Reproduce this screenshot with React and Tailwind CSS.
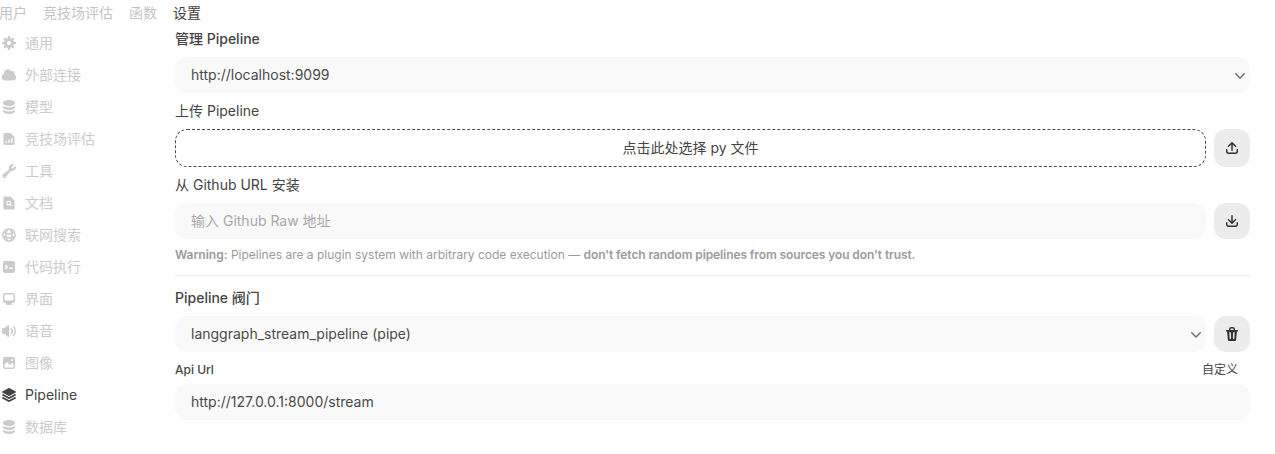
import React from 'react';
import { HiSquare3Stack3D, HiMiniChevronDown, HiMiniDocumentMagnifyingGlass, HiOutlineGlobeAlt } from 'react-icons/hi2';

const Micro = ({ children }) => (
  <svg viewBox="0 0 16 16" fill="currentColor" className="h-4 w-4 shrink-0">
    {children}
  </svg>
);

const GearIcon = () => (
  <Micro>
    <path fillRule="evenodd" clipRule="evenodd" d="M6.955 1.45A.5.5 0 0 1 7.452 1h1.096a.5.5 0 0 1 .497.45l.17 1.699c.484.12.94.312 1.356.562l1.321-1.081a.5.5 0 0 1 .67.033l.774.775a.5.5 0 0 1 .034.67l-1.08 1.32c.25.417.44.873.561 1.357l1.699.17a.5.5 0 0 1 .45.497v1.096a.5.5 0 0 1-.45.497l-1.699.17c-.12.484-.312.94-.562 1.356l1.082 1.322a.5.5 0 0 1-.034.67l-.774.774a.5.5 0 0 1-.67.033l-1.322-1.08c-.416.25-.872.44-1.356.561l-.17 1.699a.5.5 0 0 1-.497.45H7.452a.5.5 0 0 1-.497-.45l-.17-1.699a4.973 4.973 0 0 1-1.356-.562L4.108 13.37a.5.5 0 0 1-.67-.033l-.774-.775a.5.5 0 0 1-.034-.67l1.08-1.32a4.971 4.971 0 0 1-.561-1.357l-1.699-.17A.5.5 0 0 1 1 8.548V7.452a.5.5 0 0 1 .45-.497l1.699-.17c.12-.484.312-.94.562-1.356L2.629 4.107a.5.5 0 0 1 .034-.67l.774-.774a.5.5 0 0 1 .67-.033L5.43 3.71a4.97 4.97 0 0 1 1.356-.561l.17-1.699ZM6 8c0 .538.212 1.026.558 1.385l.057.057a2 2 0 0 0 2.828-2.828l-.058-.056A2 2 0 0 0 6 8Z" />
  </Micro>
);

const CloudIcon = () => (
  <svg viewBox="0 0 20 20" fill="currentColor" className="h-4 w-4 shrink-0">
    <path d="M1 12.5A4.5 4.5 0 0 0 5.5 17H15a4 4 0 0 0 1.866-7.539 3.504 3.504 0 0 0-4.504-4.272A4.5 4.5 0 0 0 4.06 8.235 4.502 4.502 0 0 0 1 12.5Z" />
  </svg>
);

const StackIcon = () => (
  <Micro>
    <path d="M8 7c3.314 0 6-1.343 6-3s-2.686-3-6-3-6 1.343-6 3 2.686 3 6 3Z" />
    <path d="M8 8.5c1.84 0 3.579-.37 4.914-1.037A6.33 6.33 0 0 0 14 6.78V8c0 1.657-2.686 3-6 3S2 9.657 2 8V6.78c.346.273.72.5 1.087.683C4.42 8.131 6.16 8.5 8 8.5Z" />
    <path d="M8 12.5c1.84 0 3.579-.37 4.914-1.037.366-.183.74-.41 1.086-.684V12c0 1.657-2.686 3-6 3s-6-1.343-6-3v-1.22c.346.273.72.5 1.087.683C4.42 12.131 6.16 12.5 8 12.5Z" />
  </Micro>
);

const ChartDocIcon = () => (
  <Micro>
    <path fillRule="evenodd" clipRule="evenodd" d="M4 2a1.5 1.5 0 0 0-1.5 1.5v9A1.5 1.5 0 0 0 4 14h8a1.5 1.5 0 0 0 1.5-1.5V6.621a1.5 1.5 0 0 0-.44-1.06L9.94 2.439A1.5 1.5 0 0 0 8.878 2H4Zm6 5.75a.75.75 0 0 1 1.5 0v3.5a.75.75 0 0 1-1.5 0v-3.5Zm-2.75 1.5a.75.75 0 0 1 1.5 0v2a.75.75 0 0 1-1.5 0v-2Zm-2 .75a.75.75 0 0 0-.75.75v.5a.75.75 0 0 0 1.5 0v-.5a.75.75 0 0 0-.75-.75Z" />
  </Micro>
);

const WrenchIcon = () => (
  <Micro>
    <path fillRule="evenodd" clipRule="evenodd" d="M11.5 8a3.5 3.5 0 0 0 3.362-4.476c-.094-.325-.497-.39-.736-.15L12.099 5.4a.48.48 0 0 1-.653.033 8.554 8.554 0 0 1-.879-.879.48.48 0 0 1 .033-.653l2.027-2.028c.24-.239.175-.642-.15-.736a3.502 3.502 0 0 0-4.476 3.427c.018.99-.133 2.093-.914 2.7l-5.31 4.13a2.015 2.015 0 1 0 2.828 2.828l4.13-5.309c.607-.78 1.71-.932 2.7-.914L11.5 8ZM3 13.25a.75.75 0 1 1-1.5 0 .75.75 0 0 1 1.5 0Z" />
  </Micro>
);

const DocSearchIcon = () => <HiMiniDocumentMagnifyingGlass className="h-4 w-4 shrink-0" />;

const GlobeIcon = () => <HiOutlineGlobeAlt className="h-4 w-4 shrink-0" strokeWidth={2.2} />;

const TerminalIcon = () => (
  <Micro>
    <path fillRule="evenodd" clipRule="evenodd" d="M2 4a2 2 0 0 1 2-2h8a2 2 0 0 1 2 2v8a2 2 0 0 1-2 2H4a2 2 0 0 1-2-2V4Zm2.22 1.97a.75.75 0 0 0 0 1.06l.97.97-.97.97a.75.75 0 1 0 1.06 1.06l1.5-1.5a.75.75 0 0 0 0-1.06l-1.5-1.5a.75.75 0 0 0-1.06 0ZM8.75 8.5a.75.75 0 0 0 0 1.5h2.5a.75.75 0 0 0 0-1.5h-2.5Z" />
  </Micro>
);

const MonitorIcon = () => (
  <Micro>
    <path fillRule="evenodd" clipRule="evenodd" d="M2 4.25A2.25 2.25 0 0 1 4.25 2h7.5A2.25 2.25 0 0 1 14 4.25v5.5A2.25 2.25 0 0 1 11.75 12h-1.312c.1.128.21.248.328.36a.75.75 0 0 1 .234.545v.345a.75.75 0 0 1-.75.75h-4.5a.75.75 0 0 1-.75-.75v-.345a.75.75 0 0 1 .234-.545c.118-.111.228-.232.328-.36H4.25A2.25 2.25 0 0 1 2 9.75v-5.5Zm2.25-.75a.75.75 0 0 0-.75.75v4.5c0 .414.336.75.75.75h7.5a.75.75 0 0 0 .75-.75v-4.5a.75.75 0 0 0-.75-.75h-7.5Z" />
  </Micro>
);

const SpeakerIcon = () => (
  <Micro>
    <path d="M7.557 2.066A.75.75 0 0 1 8 2.75v10.5a.75.75 0 0 1-1.248.56L3.59 11H2a1 1 0 0 1-1-1V6a1 1 0 0 1 1-1h1.59l3.162-2.81a.75.75 0 0 1 .805-.124ZM12.95 3.05a.75.75 0 1 0-1.06 1.06 5.5 5.5 0 0 1 0 7.78.75.75 0 1 0 1.06 1.06 7 7 0 0 0 0-9.9Z" />
    <path d="M10.828 5.172a.75.75 0 1 0-1.06 1.06 2.5 2.5 0 0 1 0 3.536.75.75 0 1 0 1.06 1.06 4 4 0 0 0 0-5.656Z" />
  </Micro>
);

const PhotoIcon = () => (
  <Micro>
    <path fillRule="evenodd" clipRule="evenodd" d="M2 4a2 2 0 0 1 2-2h8a2 2 0 0 1 2 2v8a2 2 0 0 1-2 2H4a2 2 0 0 1-2-2V4Zm10.5 5.707a.5.5 0 0 0-.146-.353l-1-1a.5.5 0 0 0-.708 0L9.354 9.646a.5.5 0 0 1-.708 0L6.354 7.354a.5.5 0 0 0-.708 0l-2 2a.5.5 0 0 0-.146.353V12a.5.5 0 0 0 .5.5h8a.5.5 0 0 0 .5-.5V9.707ZM12 5a1 1 0 1 1-2 0 1 1 0 0 1 2 0Z" />
  </Micro>
);

const PipelineIcon = () => <HiSquare3Stack3D className="h-4 w-4 shrink-0" />;

const tabs = ['用户', '竞技场评估', '函数', '设置'];

const navItems = [
  { label: '通用', icon: GearIcon },
  { label: '外部连接', icon: CloudIcon },
  { label: '模型', icon: StackIcon },
  { label: '竞技场评估', icon: ChartDocIcon },
  { label: '工具', icon: WrenchIcon },
  { label: '文档', icon: DocSearchIcon },
  { label: '联网搜索', icon: GlobeIcon },
  { label: '代码执行', icon: TerminalIcon },
  { label: '界面', icon: MonitorIcon },
  { label: '语音', icon: SpeakerIcon },
  { label: '图像', icon: PhotoIcon },
  { label: 'Pipeline', icon: PipelineIcon, active: true },
  { label: '数据库', icon: StackIcon },
];

const TrayPath = () => (
  <path d="M3.5 9.75a.75.75 0 0 0-1.5 0v1.5A2.75 2.75 0 0 0 4.75 14h6.5A2.75 2.75 0 0 0 14 11.25v-1.5a.75.75 0 0 0-1.5 0v1.5c0 .69-.56 1.25-1.25 1.25h-6.5c-.69 0-1.25-.56-1.25-1.25v-1.5Z" />
);

const UploadIcon = () => (
  <Micro>
    <path d="M7.25 10.25a.75.75 0 0 0 1.5 0V4.56l2.22 2.22a.75.75 0 1 0 1.06-1.06l-3.5-3.5a.75.75 0 0 0-1.06 0l-3.5 3.5a.75.75 0 0 0 1.06 1.06l2.22-2.22v5.69Z" />
    <TrayPath />
  </Micro>
);

const DownloadIcon = () => (
  <Micro>
    <path d="M8.75 2.75a.75.75 0 0 0-1.5 0v5.69L5.03 6.22a.75.75 0 0 0-1.06 1.06l3.5 3.5a.75.75 0 0 0 1.06 0l3.5-3.5a.75.75 0 0 0-1.06-1.06L8.75 8.44V2.75Z" />
    <TrayPath />
  </Micro>
);

const TrashIcon = () => (
  <Micro>
    <path
      fillRule="evenodd"
      clipRule="evenodd"
      d="M5 3.25V4H2.75a.75.75 0 0 0 0 1.5h.3l.815 8.15A1.5 1.5 0 0 0 5.357 15h5.285a1.5 1.5 0 0 0 1.493-1.35l.815-8.15h.3a.75.75 0 0 0 0-1.5H11v-.75A2.25 2.25 0 0 0 8.75 1h-1.5A2.25 2.25 0 0 0 5 3.25Zm2.25-.75a.75.75 0 0 0-.75.75V4h3v-.75a.75.75 0 0 0-.75-.75h-1.5ZM6.05 6a.75.75 0 0 1 .787.713l.275 5.5a.75.75 0 0 1-1.498.075l-.275-5.5A.75.75 0 0 1 6.05 6Zm3.9 0a.75.75 0 0 1 .712.787l-.275 5.5a.75.75 0 0 1-1.498-.075l.275-5.5a.75.75 0 0 1 .786-.711Z"
    />
  </Micro>
);

const SelectBox = ({ value, className = '' }) => (
  <div className={`flex h-9 items-center justify-between rounded-xl bg-[#f9f9f9] pl-4 text-sm text-[#4a4a4a] ${className}`}>
    <span>{value}</span>
    <HiMiniChevronDown className="h-5 w-5 text-[#6b7280]" />
  </div>
);

const IconButton = ({ children, tall = false }) => (
  <button className={`flex w-9 shrink-0 items-center justify-center rounded-xl bg-[#ececec] text-[#333333] ${tall ? 'h-[38px]' : 'h-9'}`}>
    {children}
  </button>
);

const App = () => {
  return (
    <div className="h-[454px] w-[1275px] overflow-hidden bg-white font-['Inter','Noto_Sans_CJK_SC',sans-serif] text-sm text-[#4a4a4a]">
      {/* Top tabs */}
      <div className="-ml-px flex h-[26px] items-center gap-4">
        {tabs.map((tab) => (
          <span key={tab} className={tab === '设置' ? 'text-[#3d3d3d]' : 'text-[#c4c4c4]'}>
            {tab}
          </span>
        ))}
      </div>

      <div className="flex">
        {/* Settings nav */}
        <nav className="mt-px flex w-[175px] shrink-0 flex-col">
          {navItems.map((item) => {
            const Icon = item.icon;
            return (
              <div
                key={item.label}
                className={`flex h-8 items-center gap-2 pl-px ${item.active ? 'text-[#444444]' : 'text-[#cbcbcb]'}`}
              >
                <Icon />
                <span>{item.label}</span>
              </div>
            );
          })}
        </nav>

        {/* Pipeline settings */}
        <main className="w-[1075px] pt-[3px]">
          <div className="leading-5 font-medium text-[#444444]">管理 Pipeline</div>
          <SelectBox value="http://localhost:9099" className="mt-2" />

          <div className="mt-2 leading-5 text-[#444444]">上传 Pipeline</div>
          <div className="mt-2 flex gap-2">
            <button className="h-[38px] flex-1 rounded-xl border border-dashed border-[#4a4a4a] text-[#444444]">
              点击此处选择 py 文件
            </button>
            <IconButton tall>
              <UploadIcon />
            </IconButton>
          </div>

          <div className="mt-2 leading-5 text-[#444444]">从 Github URL 安装</div>
          <div className="mt-2 flex gap-2">
            <input
              className="h-9 flex-1 rounded-xl bg-[#f9f9f9] px-4 pb-[2px] text-sm outline-none placeholder:text-[#a8a8a8]"
              placeholder="输入 Github Raw 地址"
            />
            <IconButton>
              <DownloadIcon />
            </IconButton>
          </div>

          <p className="mt-2 text-xs text-[#9b9b9b]">
            <span className="font-semibold">Warning:</span> Pipelines are a plugin system with arbitrary code execution —{' '}
            <span className="font-semibold tracking-[-0.1px]">don't fetch random pipelines from sources you don't trust.</span>
          </p>

          <hr className="mt-3 border-[#ececec]" />

          <div className="mt-3 leading-5 font-medium text-[#444444]">Pipeline 阀门</div>
          <div className="mt-2 flex gap-2">
            <SelectBox value="langgraph_stream_pipeline (pipe)" className="flex-1" />
            <IconButton>
              <TrashIcon />
            </IconButton>
          </div>

          <div className="mt-[10px] flex items-center justify-between pr-3 text-xs text-[#444444]">
            <span className="font-medium">Api Url</span>
            <span>自定义</span>
          </div>
          <input
            className="mt-[6px] h-9 w-full rounded-xl bg-[#f9f9f9] px-4 pb-[2px] text-sm text-[#4a4a4a] outline-none"
            defaultValue="http://127.0.0.1:8000/stream"
          />
        </main>
      </div>
    </div>
  );
};

export default App;
